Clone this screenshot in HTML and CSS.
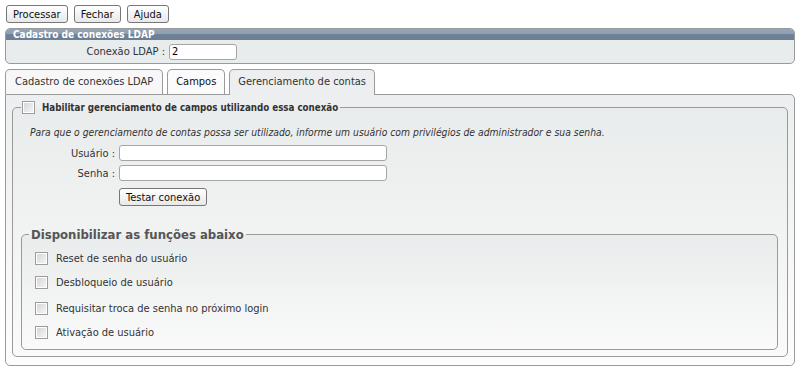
FILE: index.html
```html
<!DOCTYPE html>
<html lang="pt-BR">
<head>
    <meta charset="UTF-8">
    <title>Cadastro de conexões LDAP</title>
    <link rel="stylesheet" href="styles.css">
</head>
<body>
    <div class="page">
        <div class="toolbar">
            <button class="btn">Processar</button>
            <button class="btn">Fechar</button>
            <button class="btn">Ajuda</button>
        </div>

        <div class="box">
            <div class="box-title">Cadastro de conexões LDAP</div>
            <div class="box-row">
                <label class="box-label">Conexão LDAP :</label>
                <input class="field field-sm" type="text" value="2">
            </div>
        </div>

        <div class="tabs">
            <div class="tab">Cadastro de conexões LDAP</div>
            <div class="tab tab-light">Campos</div>
            <div class="tab active">Gerenciamento de contas</div>
        </div>

        <div class="tab-panel">
            <fieldset class="group">
                <legend class="group-legend">
                    <input type="checkbox" class="check">
                    <span>Habilitar gerenciamento de campos utilizando essa conexão</span>
                </legend>

                <div class="group-body">
                    <p class="hint">Para que o gerenciamento de contas possa ser utilizado, informe um usuário com privilégios de administrador e sua senha.</p>

                    <div class="form-row">
                        <label class="form-label">Usuário :</label>
                        <input class="field field-lg" type="text">
                    </div>
                    <div class="form-row">
                        <label class="form-label">Senha :</label>
                        <input class="field field-lg" type="password">
                    </div>
                    <div class="form-row form-actions">
                        <span class="form-label"></span>
                        <button class="btn">Testar conexão</button>
                    </div>
                </div>

                <fieldset class="functions">
                    <legend class="functions-legend">Disponibilizar as funções abaixo</legend>
                    <label class="option"><input type="checkbox" class="check"> Reset de senha do usuário</label>
                    <label class="option"><input type="checkbox" class="check"> Desbloqueio de usuário</label>
                    <label class="option option-wide"><input type="checkbox" class="check"> Requisitar troca de senha no próximo login</label>
                    <label class="option"><input type="checkbox" class="check"> Ativação de usuário</label>
                </fieldset>
            </fieldset>
        </div>
    </div>
</body>
</html>
```

FILE: styles.css
```css
body {
    margin: 0;
    font-family: "DejaVu Sans Condensed", "DejaVu Sans", Tahoma, sans-serif;
    font-size: 11px;
    color: #222;
    background: #fff;
}

.page {
    width: 790px;
    padding: 5px 0 0 5px;
}

/* botões */
.toolbar {
    display: flex;
    gap: 6px;
    padding-left: 1px;
}

.btn {
    font-family: inherit;
    font-size: 11px;
    height: 18px;
    padding: 0 6px;
    color: #111;
    border: 1px solid #777;
    border-radius: 3px;
    background: linear-gradient(#ffffff, #e8e8e8);
}

/* caixa do topo */
.box {
    margin-top: 5px;
    border: 1px solid #9a9a9a;
    border-radius: 5px;
    overflow: hidden;
    background: #e9ecec;
}

.box-title {
    height: 11px;
    line-height: 11px;
    padding-left: 7px;
    font-size: 10px;
    font-weight: bold;
    color: #fff;
    background: linear-gradient(#95a6b8 0, #8c9db0 50%, #6f8196 50%, #6c7e92 100%);
}

.box-row {
    display: flex;
    align-items: center;
    gap: 4px;
    height: 23px;
}

.box-label {
    width: 159px;
    text-align: right;
    color: #333;
}

.field {
    font-family: inherit;
    font-size: 11px;
    height: 16px;
    box-sizing: border-box;
    padding: 0 2px;
    border: 1px solid #a5a5a5;
    border-radius: 3px;
    background: #fff;
}

.field-sm {
    width: 68px;
}

.field-lg {
    width: 268px;
}

/* abas */
.tabs {
    display: flex;
    gap: 4px;
    margin-top: 5px;
}

.tab {
    height: 24px;
    line-height: 24px;
    padding: 0 8px;
    color: #333;
    border: 1px solid #9a9a9a;
    border-bottom: none;
    border-radius: 5px 5px 0 0;
    background: #f7f7f7;
}

.tab:first-child {
    padding: 0 9px;
}

.tab-light {
    color: #111;
    background: #fbfbfb;
}

.tab.active {
    position: relative;
    margin-bottom: -1px;
    height: 25px;
    background: #eceeef;
}

.tab-panel {
    border: 1px solid #9a9a9a;
    border-radius: 0 5px 5px 5px;
    padding: 0 6px 8px 6px;
    background: linear-gradient(#eceeef, #fdfdfd);
}

/* grupos */
.group {
    margin: 6px 0 0 0;
    padding: 0 9px 6px 8px;
    border: 1px solid #9a9a9a;
    border-radius: 5px;
    background: linear-gradient(#e9ecec, #fafafa);
}

.group-legend {
    display: flex;
    align-items: center;
    gap: 7px;
    margin-left: 0;
    padding: 0 2px 0 1px;
    font-size: 9.7px;
    font-weight: bold;
    color: #333;
}

.group-body {
    padding-left: 9px;
}

.hint {
    margin: 12px 0 7px 0;
    font-style: italic;
    font-size: 10.3px;
    color: #333;
}

.form-row {
    display: flex;
    align-items: center;
    gap: 4px;
    height: 16px;
    margin-bottom: 4px;
}

.form-actions {
    height: 18px;
    margin-top: 7px;
}

.form-label {
    width: 85px;
    text-align: right;
    color: #333;
}

.functions {
    margin: 21px 0 0 0;
    padding: 4px 0 5px 13px;
    border: 1px solid #9a9a9a;
    border-radius: 5px;
    background: linear-gradient(#e9ecec, #fafafa);
}

.functions-legend {
    margin-left: -6px;
    padding: 0 2px;
    font-size: 13px;
    font-weight: bold;
    color: #555;
}

.option {
    display: flex;
    align-items: center;
    gap: 8px;
    height: 24px;
    color: #333;
}

.option-wide {
    margin-top: 2px;
}

.check {
    appearance: none;
    margin: 0;
    width: 13px;
    height: 13px;
    border: 1px solid #9c9c9c;
    box-shadow: inset 0 0 0 1px #fff;
    background: linear-gradient(135deg, #d4d4d4, #f7f7f7);
}
```
